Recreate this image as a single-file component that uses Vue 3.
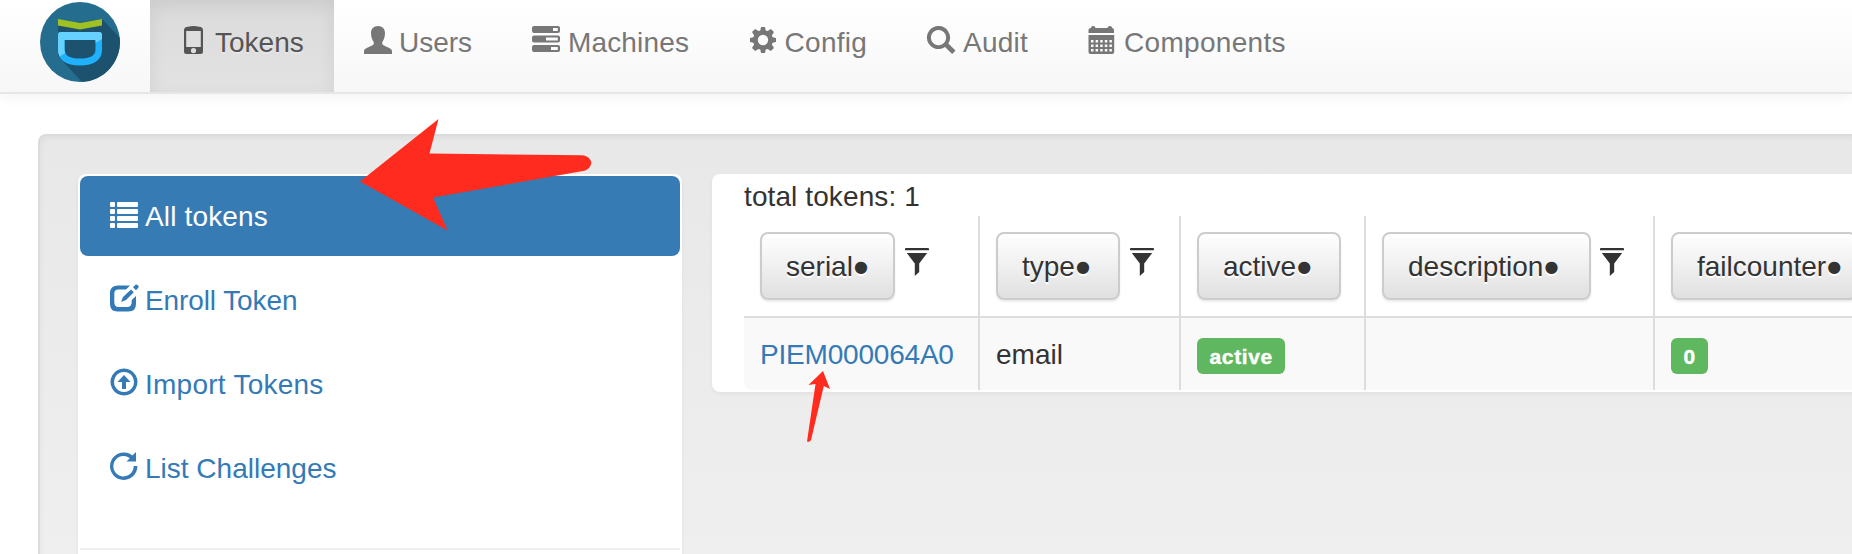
<script setup>
const icons = {
  phone: 'M8 .8Q13.500 -.8 19 .8Q23 1.200 23 4V25.500Q23 28 20.500 28H6.500Q4 28 4 25.500V4Q4 1.200 8 .8ZM6.200 5V21H20.800V5ZM13.500 22A2.600 2.600 0 1 0 13.500 27.200A2.600 2.600 0 1 0 13.500 22Z',
  user: 'M14 0C18.500 0 21 3 21 7C21 11 19.800 14 18.300 16V18.200C20 20.500 27.600 21.500 28 25V28H0V25C0.400 21.500 8 20.500 9.700 18.200V16C8.200 14 7 11 7 7C7 3 9.500 0 14 0Z',
  server: 'M2 0H26Q28 0 28 2V5Q28 7 26 7H2Q0 7 0 5V2Q0 0 2 0ZM21 2V5H25.800V2ZM2 9.500H26Q28 9.500 28 11.500V14.500Q28 16.500 26 16.500H2Q0 16.500 0 14.500V11.500Q0 9.500 2 9.500ZM14 11.500V14.500H25.800V11.500ZM2 19H26Q28 19 28 21V24Q28 26 26 26H2Q0 26 0 24V21Q0 19 2 19ZM19 21V24H25.800V21Z',
  gear: 'M12 1H16L16.700 4.400L18.500 5.100L21.900 3L25 6.100L22.900 9.500L23.600 11.300L27 12V16L23.600 16.700L22.900 18.500L25 21.900L21.900 25L18.500 22.900L16.700 23.600L16 27H12L11.300 23.600L9.500 22.900L6.100 25L3 21.900L5.100 18.500L4.400 16.700L1 16V12L4.400 11.300L5.100 9.500L3 6.100L6.100 3L9.500 5.100L11.300 4.400ZM14 8.800A5.200 5.200 0 1 0 14 19.200A5.200 5.200 0 1 0 14 8.800Z',
  search: 'M11.500 0A11.500 11.500 0 0 1 21.300 17.500L28.500 24.600L25.200 28L18 20.900A11.500 11.500 0 1 1 11.500 0ZM11.500 4A7.600 7.600 0 1 0 11.510 4Z',
  calendar: 'M0.500 7V4Q0.500 2 3 2V1.500Q3 0 5 0Q7.500 0 7.500 2H19.500Q19.500 0 22 0Q24 0 24 1.500V2Q26 2 26 4V7ZM0.500 9H26.200V26Q26.200 28 24 28H2.500Q0.500 28 0.500 26ZM3 14V16.500H5.500V14ZM7.600 14V16.500H10.100V14ZM12.200 14V16.500H14.700V14ZM16.800 14V16.500H19.300V14ZM21.400 14V16.500H23.900V14ZM3 18.500V21H5.500V18.500ZM7.600 18.500V21H10.100V18.500ZM12.200 18.500V21H14.700V18.500ZM16.800 18.500V21H19.300V18.500ZM21.400 18.500V21H23.900V18.500ZM3 23V25.500H5.500V23ZM7.600 23V25.500H10.100V23ZM12.200 23V25.500H14.700V23ZM16.800 23V25.500H19.300V23ZM21.400 23V25.500H23.900V23Z',
  list: 'M1 0H4Q5 0 5 1V4Q5 5 4 5H1Q0 5 0 4V1Q0 0 1 0ZM8 0H27Q28 0 28 1V4Q28 5 27 5H8Q7 5 7 4V1Q7 0 8 0ZM1 7H4Q5 7 5 8V11Q5 12 4 12H1Q0 12 0 11V8Q0 7 1 7ZM8 7H27Q28 7 28 8V11Q28 12 27 12H8Q7 12 7 11V8Q7 7 8 7ZM1 14H4Q5 14 5 15V18Q5 19 4 19H1Q0 19 0 18V15Q0 14 1 14ZM8 14H27Q28 14 28 15V18Q28 19 27 19H8Q7 19 7 18V15Q7 14 8 14ZM1 21H4Q5 21 5 22V25Q5 26 4 26H1Q0 26 0 25V22Q0 21 1 21ZM8 21H27Q28 21 28 22V25Q28 26 27 26H8Q7 26 7 25V22Q7 21 8 21Z',
  edit: 'M8 1.500H20L16 5.500H8.500Q4.300 5.500 4.300 9.500V18Q4.300 23 8.500 23H17Q21.700 23 21.700 18V16L26 12V20Q26 27.500 18.500 27.500H7.500Q0 27.500 0 20V9Q0 1.500 8 1.500ZM11 18L13 13L21 5.500L23.800 8.300L16 16ZM23 3.300L25.500 .800Q26.500 0 27.500 1L28.300 1.800Q29.200 2.700 28.300 3.700L26 6.200Z',
  upload: 'M14 .500A13.500 13.500 0 1 1 13.990 .500ZM14 4A10 10 0 1 0 14.010 4ZM14 7L20.500 14H16V21H12V14H7.500Z',
  refresh: 'M26 0V9.500H16.500L19.800 6.200A10.200 10.200 0 1 0 23.700 14H27.400A13.700 13.700 0 1 1 22.400 3.600Z',
  filter: 'M3 0H25Q26 0 26 1V2Q26 2.300 25 2.300H3Q2 2.300 2 2V1Q2 0 3 0ZM3.800 5H24.200L16.200 15.500V24L11.800 28V15.500Z'
}
const nav = [
  { label: 'Tokens', icon: 'phone', active: true },
  { label: 'Users', icon: 'user' },
  { label: 'Machines', icon: 'server' },
  { label: 'Config', icon: 'gear' },
  { label: 'Audit', icon: 'search' },
  { label: 'Components', icon: 'calendar' }
]
const side = [
  { label: 'All tokens', icon: 'list', active: true },
  { label: 'Enroll Token', icon: 'edit' },
  { label: 'Import Tokens', icon: 'upload' },
  { label: 'List Challenges', icon: 'refresh' }
]
const columns = [
  { key: 'serial', filter: true },
  { key: 'type', filter: true },
  { key: 'active' },
  { key: 'description', filter: true },
  { key: 'failcounter' }
]
</script>

<template>
  <div class="page">
    <header class="navbar">
      <svg class="logo" viewBox="0 0 80 80">
        <circle cx="40" cy="40" r="40" fill="#246d8e" />
        <path d="M62 17L79.700 35.500A40 40 0 0 1 42 80L18 54V24Z" fill="#1c526d" />
        <path d="M18 17L40 21L62 17V23.500L40 27.500L18 23.500Z" fill="#9fc122" />
        <path d="M21 30H59Q62 30 62 33V48C62 58 54 63.500 40 63.500C26 63.500 18 58 18 48V33Q18 30 21 30ZM24.500 38V47C24.500 54 30 56.500 40 56.500C50 56.500 55.500 54 55.500 47V38Z" fill="#1fb1fb" fill-rule="evenodd" />
        <path d="M21 30H59Q62 30 62 33V37L55.500 41V38H24.500V47C24.500 49 25 50.500 25.500 51L19.500 54.500Q18 51 18 48V33Q18 30 21 30Z" fill="#66d0ff" />
      </svg>
      <nav class="menu">
        <a v-for="n in nav" :key="n.label" class="tab" :class="[n.icon, { active: n.active }]">
          <svg class="icon" viewBox="0 0 28 28"><path :d="icons[n.icon]" /></svg>
          <span>{{ n.label }}</span>
        </a>
      </nav>
    </header>

    <main class="well">
      <aside class="sidebar">
        <a v-for="s in side" :key="s.label" class="item" :class="[s.icon, { active: s.active }]">
          <svg class="icon" viewBox="0 0 28 28"><path :d="icons[s.icon]" /></svg>
          <span>{{ s.label }}</span>
        </a>
        <hr />
      </aside>

      <section class="panel">
        <p class="total">total tokens: 1</p>
        <div class="table">
          <div v-for="c in columns" :key="c.key" class="col" :class="'col-' + c.key">
            <div class="head">
              <button class="btn"><span class="name">{{ c.key }}</span><span class="dot">●</span></button>
              <svg v-if="c.filter" class="icon funnel" viewBox="0 0 28 28"><path :d="icons.filter" /></svg>
            </div>
            <div class="cell">
              <a v-if="c.key === 'serial'" class="link">PIEM000064A0</a>
              <span v-else-if="c.key === 'type'">email</span>
              <span v-else-if="c.key === 'active'" class="label wide">active</span>
              <span v-else-if="c.key === 'failcounter'" class="label">0</span>
            </div>
          </div>
        </div>
      </section>
    </main>

    <svg class="arrows" viewBox="0 0 1852 554">
      <path d="M360 181.500L438.500 119L429.500 153.500L582 155.300C587 155.500 591 159 591.300 162.500C591 167 587.500 170.500 583 171L433 197.500L447.500 230.500Z" />
      <path d="M823 371L830 389L823.800 386L811 440Q810 442.500 807 441.500L815.500 384L808.500 385Z" />
    </svg>
  </div>
</template>

<style>
body { overflow: hidden; }
</style>

<style scoped>
.page {
  position: relative;
  width: 1852px;
  height: 554px;
  overflow: hidden;
  background: #fff;
  color: #333;
  font: 28px/40px "Liberation Sans", Arial, sans-serif;
}
.page * { box-sizing: border-box; }
.icon { display: block; flex: none; width: 28px; height: 28px; fill: currentColor; fill-rule: evenodd; overflow: visible; }
.navbar {
  display: flex;
  height: 94px;
  padding-left: 40px;
  border-bottom: 2px solid #e6e6e6;
  background: linear-gradient(#fff, #f7f7f7);
  box-shadow: 0 2px 14px rgba(0, 0, 0, .06);
}
.logo { width: 80px; height: 80px; margin: 2px 30px 0 0; }
.menu { display: flex; }
.tab { display: flex; gap: 7px; height: 92px; padding: 23px 30px 0; color: #777; white-space: nowrap; text-shadow: 0 2px 0 rgba(255, 255, 255, .25); }
.tab .icon { margin-top: 3px; }
.tab.active { color: #555; background: linear-gradient(#dbdbdb, #e2e2e2); box-shadow: inset 0 6px 18px rgba(0, 0, 0, .075); }
.tab.phone { width: 184px; }
.tab.user { width: 168px; }
.tab.server { width: 217px; gap: 8px; letter-spacing: .15px; }
.tab.gear { width: 178px; gap: 7.500px; letter-spacing: .3px; }
.tab.search { width: 161px; gap: 8px; letter-spacing: .25px; }
.tab.calendar { gap: 8px; letter-spacing: .3px; }
.well {
  display: flex;
  align-items: flex-start;
  gap: 30px;
  width: 1900px;
  height: 800px;
  margin: 40px 0 0 38px;
  padding: 38px;
  border: 2px solid #dcdcdc;
  border-radius: 8px;
  background: linear-gradient(#e8e8e8, #f5f5f5);
  box-shadow: inset 0 2px 6px rgba(0, 0, 0, .05);
}
.sidebar {
  display: flex;
  flex-direction: column;
  flex: none;
  gap: 4px;
  width: 604px;
  height: 600px;
  padding: 2px;
  border-radius: 8px;
  background: #fff;
  box-shadow: 0 2px 4px rgba(0, 0, 0, .05);
}
.item { display: flex; gap: 7px; flex: none; height: 80px; padding: 21px 30px 0; border-radius: 8px; color: #337ab7; }
.item .icon { margin-top: 3px; }
.item.list { letter-spacing: .15px; }
.item.edit { letter-spacing: -.1px; }
.item.upload { letter-spacing: .25px; }
.item.list .icon { margin-top: 5px; }
.item.active { background: #377bb5; color: #fff; }
hr { width: 600px; height: 2px; margin: 36px 0 0; border: 0; background: #eee; }
.panel { flex: none; width: 1150px; height: 218px; padding-left: 32px; border-radius: 8px; background: #fff; box-shadow: 0 2px 4px rgba(0, 0, 0, .05); }
.total { height: 42px; margin: 0; padding-top: 3px; letter-spacing: .1px; }
.table { display: flex; border-radius: 0 0 0 8px; overflow: hidden; }
.col { flex: none; border-right: 2px solid #ddd; }
.col-serial { width: 236px; }
.col-type { width: 201px; }
.col-active { width: 185px; }
.col-description { width: 289px; }
.col-failcounter { width: 240px; }
.head { display: flex; height: 102px; padding: 16px 0 0 16px; border-bottom: 2px solid #ddd; }
.btn {
  display: flex;
  align-items: center;
  flex: none;
  height: 68px;
  padding: 2px 0 0 24px;
  border: 2px solid #ccc;
  border-radius: 8px;
  background: linear-gradient(#fff, #e0e0e0);
  box-shadow: inset 0 2px 0 rgba(255, 255, 255, .15), 0 2px 2px rgba(0, 0, 0, .075);
  color: #333;
  font: inherit;
  text-shadow: 0 2px 0 #fff;
}
.dot { width: 16px; margin-left: 0; font: 16px/40px "DejaVu Sans", sans-serif; letter-spacing: 0; text-align: center; }
.col-serial .btn { width: 135px; }
.col-type .btn { width: 124px; }
.col-active .btn { width: 144px; }
.col-description .btn { width: 209px; }
.col-failcounter .btn { width: 186px; }
.funnel { margin: 16px 0 0 8px; }
.col-description .funnel { margin-left: 7px; }
.cell { height: 72px; padding: 17px 16px 0; background: #f9f9f9; white-space: nowrap; }
.link { color: #337ab7; letter-spacing: -.2px; }
.label { display: block; width: max-content; height: 36px; margin-top: 3px; padding: 0 12.600px; border-radius: 6px; background: #5fb760; color: #fff; font-size: 21px; font-weight: bold; line-height: 37px; -webkit-text-stroke: .4px #fff; }
.label.wide { width: 88px; letter-spacing: .6px; }
.arrows { position: absolute; inset: 0; width: 1852px; height: 554px; fill: #ff2b1e; pointer-events: none; }
</style>
